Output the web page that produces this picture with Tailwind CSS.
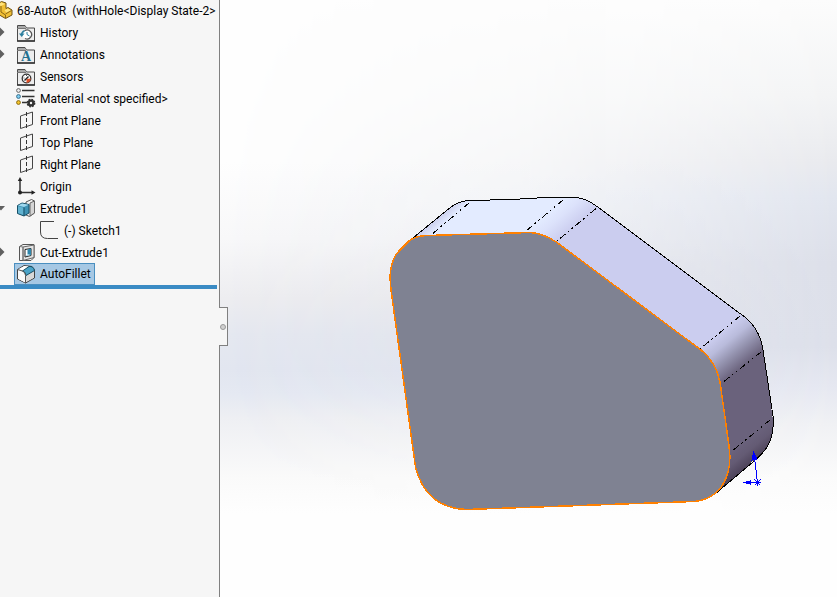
<!doctype html>
<html lang="en" class="h-full">
    <head>
        <meta charset="UTF-8" />
        <meta name="viewport" content="width=device-width, initial-scale=1.0" />
        <title>68-AutoR</title>
        <script src="https://cdn.jsdelivr.net/npm/@tailwindcss/browser@4"></script>
    </head>
    <body
        class="h-full min-h-screen flex overflow-hidden bg-white text-black text-[12px] leading-[22px] font-['Roboto','Open_Sans',sans-serif]"
    >
        <!-- Shared icon shapes -->
        <svg class="hidden">
            <symbol id="folder" viewBox="0 0 20 22">
                <path d="M1.5 19V3.5H9l1.500 2.500h8V19z" fill="#ededed" stroke="#4a4a4a" />
                <path d="M2 4h7l1 2H2z" fill="#a9a9a9" />
                <path d="M1 6.500h9" stroke="#777" />
                <path d="M1 19h18" stroke="#333" stroke-width="1.500" />
            </symbol>
            <symbol id="plane" viewBox="0 0 20 22">
                <path d="M4.500 6L16.500 2v12.500L4.500 18.500z" fill="none" stroke="#444" />
                <path d="M10.500 2v17" stroke="#333" stroke-dasharray="4 2" />
            </symbol>
        </svg>

        <aside class="relative w-[220px] shrink-0 bg-[#f6f6f6] border-r border-[#808080]">
            <ul class="whitespace-nowrap">
                <li class="flex items-center h-[22px]">
                    <svg class="w-[17px] h-[22px] shrink-0" viewBox="0 0 17 22">
                        <path d="M-4 5L1.500 1.500 6 3v5.500l2-1L12 10v5l-6.500 3.500L-4 13z" fill="#f0bf35" stroke="#6d5216" />
                        <path d="M-2 4.500l3.500-2L5 4 1 6z M4.500 10.500l3-2 3.500 2-4.500 2z" fill="#ffe37c" />
                        <path d="M1 6v6l4.500 3V18 M5.500 14l6-3.500" fill="none" stroke="#8a6715" />
                    </svg>
                    <span>68-AutoR&nbsp; (withHole&lt;Display State-2&gt;</span>
                </li>
                <li class="flex items-center h-[22px]">
                    <button class="w-4 h-[22px]" aria-label="Expand History">
                        <svg class="w-4 h-[22px]" viewBox="0 0 16 22"><path d="M0 5.500L4.500 10 0 14.500z" fill="#606060" /></svg>
                    </button>
                    <svg class="w-5 h-[22px] mr-1" viewBox="0 0 20 22">
                        <use href="#folder" />
                        <circle cx="11" cy="12.500" r="4.500" fill="#fff" />
                        <path d="M8.500 8.800a4.500 4.500 0 1 1 .5 7.700" fill="none" stroke="#555" stroke-width="1.300" />
                        <path d="M5.500 13a5 5 0 0 1 3-4.300" fill="none" stroke="#2b7f9f" stroke-width="1.500" />
                        <path d="M3 11.500h5.500L5.700 15z" fill="#2b7f9f" />
                        <path d="M11 10v2.500l2.500 1.500" fill="none" stroke="#2b7f9f" />
                    </svg>
                    <span>History</span>
                </li>
                <li class="flex items-center h-[22px]">
                    <button class="w-4 h-[22px]" aria-label="Expand Annotations">
                        <svg class="w-4 h-[22px]" viewBox="0 0 16 22"><path d="M0 5.500L4.500 10 0 14.500z" fill="#606060" /></svg>
                    </button>
                    <svg class="w-5 h-[22px] mr-1" viewBox="0 0 20 22">
                        <use href="#folder" />
                        <text x="10" y="17" text-anchor="middle" class="font-['Liberation_Serif',serif] text-[14px] font-bold" fill="#24708f">A</text>
                    </svg>
                    <span>Annotations</span>
                </li>
                <li class="flex items-center h-[22px] pl-4">
                    <svg class="w-5 h-[22px] mr-1" viewBox="0 0 20 22">
                        <use href="#folder" />
                        <circle cx="10.500" cy="12.500" r="4.300" fill="#fff" stroke="#333" stroke-width="1.300" />
                        <path d="M10.500 13l4.300-.5a4.300 4.300 0 0 1-4.300 4.300z" fill="#e04f27" />
                        <path d="M8.500 14.500l4-4" stroke="#222" stroke-width="1.500" />
                        <path d="M7.500 12h1M10 9.500h1" stroke="#555" />
                    </svg>
                    <span>Sensors</span>
                </li>
                <li class="flex items-center h-[22px] pl-4">
                    <svg class="w-5 h-[22px] mr-1" viewBox="0 0 20 22">
                        <path d="M6 2.500h12.500M6 8.500h12.500M6 14.500h5" stroke="#333" stroke-width="1.500" />
                        <circle cx="2.500" cy="2.500" r="1.900" fill="#eee" stroke="#666" />
                        <circle cx="2.500" cy="8.500" r="1.900" fill="#7fd0f5" stroke="#3b6f8a" />
                        <circle cx="2.500" cy="14.500" r="1.900" fill="#f7c62b" stroke="#8a6a14" />
                        <circle cx="15" cy="15" r="3.600" fill="#333" stroke="#333" stroke-width="1.600" stroke-dasharray="1.600 1.230" />
                        <circle cx="15" cy="15" r="2.300" fill="none" stroke="#333" stroke-width="2" />
                        <circle cx="15" cy="15" r="1.200" fill="#f6f6f6" />
                    </svg>
                    <span>Material &lt;not specified&gt;</span>
                </li>
                <li class="flex items-center h-[22px] pl-4">
                    <svg class="w-5 h-[22px] mr-1"><use href="#plane" /></svg>
                    <span>Front Plane</span>
                </li>
                <li class="flex items-center h-[22px] pl-4">
                    <svg class="w-5 h-[22px] mr-1"><use href="#plane" /></svg>
                    <span>Top Plane</span>
                </li>
                <li class="flex items-center h-[22px] pl-4">
                    <svg class="w-5 h-[22px] mr-1"><use href="#plane" /></svg>
                    <span>Right Plane</span>
                </li>
                <li class="flex items-center h-[22px] pl-4">
                    <svg class="w-5 h-[22px] mr-1" viewBox="0 0 20 22">
                        <path d="M4 3v13.500h12" fill="none" stroke="#333" stroke-width="1.500" />
                        <path d="M4 1l2.200 4H1.800z M19.500 16.500l-4 2.200v-4.400z" fill="#222" />
                        <circle cx="4" cy="16.500" r="2" fill="#222" />
                    </svg>
                    <span>Origin</span>
                </li>
                <li>
                    <div class="flex items-center h-[22px]">
                        <button class="w-4 h-[22px]" aria-label="Collapse Extrude1">
                            <svg class="w-4 h-[22px]" viewBox="0 0 16 22"><path d="M-3 8H5L1 12.500z" fill="#606060" /></svg>
                        </button>
                        <svg class="w-5 h-[22px] mr-1" viewBox="0 0 20 22">
                            <path d="M10 4l5.500-2.500L18.500 3v12l-5 3.500L10 17z" fill="#f4f4f4" stroke="#555" />
                            <path d="M14 5v13l4.500-3V3z" fill="#d5d5d5" stroke="#666" />
                            <path d="M1.500 7.500L6 5l7 1.500v8.500l-5 3-6.500-2.500z" fill="#3f93b5" stroke="#174f66" />
                            <path d="M2 7.500L6 5.500l6.500 1.200L8 9z" fill="#9fd8ee" />
                            <path d="M2 8.300l5.500 1.500v7.200L2 15z" fill="#62b3d1" />
                            <path d="M8 9.500V18" stroke="#174f66" />
                        </svg>
                        <span>Extrude1</span>
                    </div>
                    <ul>
                        <li class="flex items-center h-[22px] pl-10">
                            <svg class="w-5 h-[22px] mr-1" viewBox="0 0 20 22">
                                <path d="M14 1.500H.5V12q0 6.500 7 6.500H18" fill="none" stroke="#444" />
                            </svg>
                            <span>(-) Sketch1</span>
                        </li>
                    </ul>
                </li>
                <li class="flex items-center h-[22px]">
                    <button class="w-4 h-[22px]" aria-label="Expand Cut-Extrude1">
                        <svg class="w-4 h-[22px]" viewBox="0 0 16 22"><path d="M0 5.500L4.500 10 0 14.500z" fill="#606060" /></svg>
                    </button>
                    <svg class="w-5 h-[22px] mr-1" viewBox="0 0 20 22">
                        <path d="M3.500 4.500L7 2.500h11v13l-3 3H3.500z" fill="#f3f3f3" stroke="#555" />
                        <path d="M7 5L18 3v12.500L7 18.500z" fill="#e4e4e4" stroke="#666" />
                        <path d="M3.500 4.500L7 5v13" fill="none" stroke="#777" />
                        <path d="M9 7.500l6-1v7L9 15z" fill="#fff" stroke="#222" />
                        <path d="M11.500 7.500l3.500-1v7l-3.500-1.500z" fill="#2f86ab" />
                        <path d="M9.500 14.300l2.500-2.300 2.500 1z" fill="#8fcbe3" />
                    </svg>
                    <span>Cut-Extrude1</span>
                </li>
                <li class="flex h-[21px] pl-[14px]">
                    <button
                        class="flex items-center h-[22px] -mt-px pl-px pr-[3px] bg-[#a6c8e4] border border-[#4a8fc0]"
                    >
                        <svg class="w-5 h-[22px] mr-1" viewBox="0 0 20 22">
                            <path d="M1.500 6.500L8 2.500l8 1L18.500 7v8l-9 5-8-4z" fill="#e9e9e9" stroke="#444" />
                            <path d="M2 7l7 3v9.500L2 15.800z" fill="#fafafa" />
                            <path d="M2 6.500L8.500 3l4 .5L6 8.300z" fill="#fff" />
                            <path d="M9.500 12v7l8.500-4.500V8z" fill="#d8d8d8" />
                            <path d="M6.500 8L13 3.500q4.500-.5 5.500 4L10 12.500q-.5-4-3.500-4.500z" fill="#4aa3c7" stroke="#174f66" />
                            <path d="M1.500 6.500l5 1.500q3 1 3 4.500V20" fill="none" stroke="#555" />
                        </svg>
                        <span>AutoFillet</span>
                    </button>
                </li>
            </ul>
            <div class="h-1 mr-[2px] bg-[#3a8bc4]"></div>

            <!-- Panel splitter handle -->
            <button
                class="absolute top-[307px] -right-[9px] w-[9px] h-[39px] bg-[#f6f6f6] border border-l-0 border-[#808080] flex items-center justify-center"
                aria-label="Collapse panel"
            >
                <span class="w-[6px] h-[6px] rounded-full bg-[#d0d0d0] border border-[#999999]"></span>
            </button>
        </aside>

        <main class="flex-1 min-w-0">
            <svg
                class="block w-full h-full"
                viewBox="220 0 617 597"
                preserveAspectRatio="xMidYMid slice"
                role="img"
                aria-label="Filleted part"
            >
                <defs>
                    <linearGradient id="skyLeft" gradientUnits="userSpaceOnUse" x1="0" y1="0" x2="0" y2="597">
                        <stop offset="0.27" stop-color="#fefefe" />
                        <stop offset="0.4" stop-color="#f8f8f9" />
                        <stop offset="0.5" stop-color="#ededf0" />
                        <stop offset="0.56" stop-color="#e5e8f0" />
                        <stop offset="0.62" stop-color="#e2e6f0" />
                        <stop offset="0.66" stop-color="#e5e9f2" />
                        <stop offset="0.7" stop-color="#eeeff3" />
                        <stop offset="0.8" stop-color="#fafafa" />
                        <stop offset="0.86" stop-color="#fefefe" />
                    </linearGradient>
                    <linearGradient id="skyRight" gradientUnits="userSpaceOnUse" x1="0" y1="0" x2="0" y2="597">
                        <stop offset="0" stop-color="#fcfcfc" />
                        <stop offset="0.16" stop-color="#f3f4f5" />
                        <stop offset="0.27" stop-color="#e9eaee" />
                        <stop offset="0.33" stop-color="#e2e6ef" />
                        <stop offset="0.44" stop-color="#dcdfe9" />
                        <stop offset="0.58" stop-color="#dde0ea" />
                        <stop offset="0.65" stop-color="#e6e8f1" />
                        <stop offset="0.71" stop-color="#f0f1f4" />
                        <stop offset="0.8" stop-color="#fbfbfb" />
                        <stop offset="0.86" stop-color="#fefefe" />
                    </linearGradient>
                    <linearGradient id="fade" gradientUnits="userSpaceOnUse" x1="220" y1="0" x2="837" y2="0">
                        <stop offset="0" stop-color="#000" />
                        <stop offset="0.5" stop-color="#555" />
                        <stop offset="1" stop-color="#fff" />
                    </linearGradient>
                    <mask id="fadeMask" maskUnits="userSpaceOnUse" x="220" y="0" width="617" height="597">
                        <rect x="220" width="617" height="597" fill="url(#fade)" />
                    </mask>
                    <linearGradient id="filletLeft" gradientUnits="userSpaceOnUse" x1="463" y1="196" x2="469" y2="203">
                        <stop offset="0" stop-color="#ccd0ee" />
                        <stop offset="1" stop-color="#e3ebff" />
                    </linearGradient>
                    <linearGradient id="filletTop" gradientUnits="userSpaceOnUse" x1="563" y1="200" x2="581" y2="221">
                        <stop offset="0" stop-color="#e3ebff" />
                        <stop offset="0.4" stop-color="#dce2fb" />
                        <stop offset="1" stop-color="#cbcdef" />
                    </linearGradient>
                    <linearGradient id="filletRight" gradientUnits="userSpaceOnUse" x1="740" y1="316" x2="766" y2="348">
                        <stop offset="0" stop-color="#cbcdef" />
                        <stop offset="0.3" stop-color="#b9bbdb" />
                        <stop offset="0.6" stop-color="#9695b1" />
                        <stop offset="1" stop-color="#6a627c" />
                    </linearGradient>
                    <linearGradient id="filletBottom" gradientUnits="userSpaceOnUse" x1="770" y1="420" x2="783" y2="436">
                        <stop offset="0" stop-color="#6a627c" />
                        <stop offset="0.5" stop-color="#645b74" />
                        <stop offset="1" stop-color="#50465d" />
                    </linearGradient>
                </defs>

                <rect x="220" width="617" height="597" fill="url(#skyLeft)" />
                <rect x="220" width="617" height="597" fill="url(#skyRight)" mask="url(#fadeMask)" />

                <!-- Side faces -->
                <g shape-rendering="crispEdges">
                    <path d="M408 242L446 211Q457 201 469 200.500V203L428 238z" fill="url(#filletLeft)" />
                    <path d="M469 200.500L545 198L566 197.500L524 235L428 238z" fill="#e3ebff" />
                    <path d="M566 197.500H577Q587 199 598 207L555 243L524 235z" fill="url(#filletTop)" />
                    <path d="M598 207L742 315L700 350L555 243z" fill="#cbcdef" />
                    <path d="M742 315Q760 328 763 352L720 386L700 350z" fill="url(#filletRight)" />
                    <path d="M763 352L773 420L730 455L719 384z" fill="#6a627c" />
                    <path d="M773 419Q774 438 765 450L753 461L715 494L728 453z" fill="url(#filletBottom)" />

                    <path
                        d="M408 242L446 211Q457 201 469 200.500L512 199.500L545 197.500H577Q587 199 597 206.500L740 313.500Q760 327 763 350L773 416Q775 437 765 450Q760 456 753 462L715 494"
                        fill="none"
                        stroke="#000"
                    />
                    <path
                        d="M469 203L431 235M563 200L526 231M596 208.500L557 241M740 316L700 349M761 352L722 383M770 420L731 452"
                        fill="none"
                        stroke="#000"
                        stroke-dasharray="7 3 2 3 2 3"
                    />

                    <!-- Front face -->
                    <path
                        d="M390 277Q391 259 399 251L409 241Q415 236 427 235.500L530 232.500Q543 233 557 242.500L701 350Q716 362 720 382L729 446C733 474 722 499 694 501.500L466 509.500Q426 508 415.500 467L391 290Z"
                        fill="#7f8292"
                        stroke="#ff8000"
                        stroke-width="1.500"
                    />
                </g>

                <!-- Origin triad -->
                <g stroke="#0000ff" fill="#0000ff" shape-rendering="crispEdges">
                    <path d="M757.500 482.500L754.500 458M757 482.500H749" />
                    <path d="M753.500 452.500L752 460L757 459z M743.500 482.500L750 481V484z" />
                    <path d="M757.500 479V486M754 482.500H761M754.500 479.500L760.500 485.500M754.500 485.500L760.500 479.500" />
                </g>
            </svg>
        </main>
    </body>
</html>
